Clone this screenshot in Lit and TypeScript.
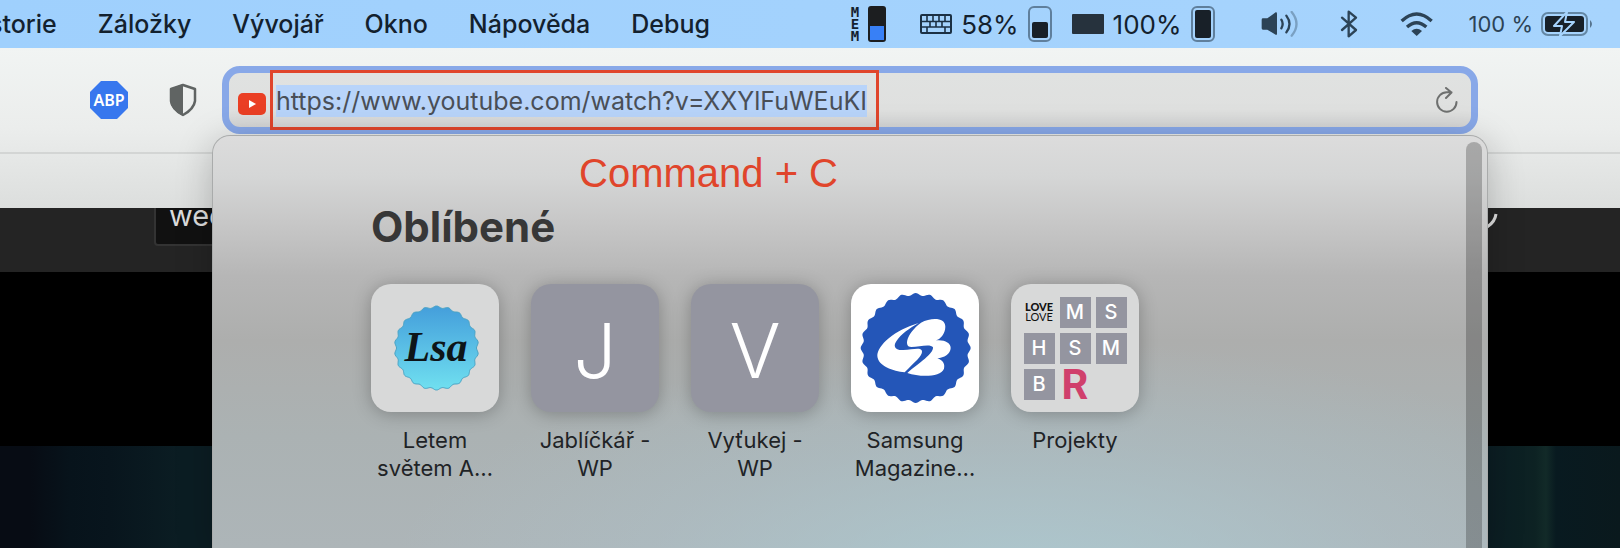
import { LitElement, html, css } from "lit";
import { customElement, property } from "lit/decorators.js";

/** Outline of a round badge with a wavy rim. */
function scallop(cx: number, cy: number, r: number, depth: number, waves: number): string {
  const steps = waves * 12;
  const points: string[] = [];
  for (let i = 0; i < steps; i++) {
    const a = (i / steps) * Math.PI * 2;
    const d = r + depth * Math.cos(a * waves);
    points.push(`${(cx + d * Math.sin(a)).toFixed(1)} ${(cy - d * Math.cos(a)).toFixed(1)}`);
  }
  return `M${points.join("L")}Z`;
}

const sans = css`"Inter", "Liberation Sans", sans-serif`;

@customElement("menu-bar")
class MenuBar extends LitElement {
  static styles = css`
    :host {
      display: flex;
      justify-content: space-between;
      align-items: center;
      height: 48px;
      padding-right: 27px;
      overflow: hidden;
      background: linear-gradient(90deg, #9fd0fd, #a7d4fd);
      color: #13212e;
      font-family: ${sans};
    }
    .menus {
      display: flex;
      gap: 41px;
      margin-left: -36px;
    }
    button {
      padding: 0;
      border: 0;
      background: none;
      color: inherit;
      font: 450 25px/32px ${sans};
    }
    .status, .monitors, .system, .monitor {
      display: flex;
      align-items: center;
    }
    .status { gap: 46px; }
    .monitors { gap: 20px; font-size: 26px; }
    .monitor { gap: 9px; }
    .memory { margin-right: 14px; }
    .stack {
      display: flex;
      flex-direction: column;
      font: 700 14px/12px "DejaVu Sans Mono", monospace;
    }
    .system { gap: 36px; color: #2c4356; }
    .speaker, .bluetooth { margin-right: 6px; }
    .power {
      display: flex;
      align-items: center;
      gap: 8px;
      font-size: 22px;
    }
    svg { display: block; flex: none; }
  `;

  private gauge(level: number) {
    const h = Math.round(28 * level);
    return html`<svg width="24" height="36" viewBox="0 0 24 36">
      <rect x="1" y="1" width="22" height="34" rx="5" fill="none" stroke="#5f7f9c" stroke-width="2" />
      <rect x="4" y=${32 - h} width="16" height=${h} rx="2" fill="#182028" />
    </svg>`;
  }

  render() {
    const menus = ["Historie", "Záložky", "Vývojář", "Okno", "Nápověda", "Debug"];
    return html`
      <nav class="menus">${menus.map((m) => html`<button>${m}</button>`)}</nav>
      <div class="status">
        <div class="monitors">
          <div class="monitor memory">
            <div class="stack"><span>M</span><span>E</span><span>M</span></div>
            <svg width="18" height="36" viewBox="0 0 18 36">
              <rect width="18" height="36" rx="3" fill="#1c1e20" />
              <rect x="2" y="20" width="14" height="14" fill="#3880f6" />
            </svg>
          </div>
          <div class="monitor">
            <svg width="32" height="20" viewBox="0 0 32 20" fill="none" stroke="#1b3044" stroke-width="2">
              <rect x="1" y="1" width="30" height="18" rx="1" />
              <path d="M1 7.5H31M1 13H31M7 1V7M13 1V7M19 1V7M25 1V7M10 7.500V13M16 7.500V13M22 7.500V13M7 13V19M25 13V19" stroke-width="1.600" />
            </svg>
            <span>58%</span>${this.gauge(0.57)}
          </div>
          <div class="monitor">
            <svg width="32" height="20" viewBox="0 0 32 20"><rect width="32" height="20" rx="1" fill="#26323d" /></svg>
            <span>100%</span>${this.gauge(1)}
          </div>
        </div>
        <div class="system">
          <svg class="speaker" width="37" height="26" viewBox="125 34 111 78" fill="none" stroke="#2c4356" stroke-width="7" stroke-linecap="round">
            <path d="M131 56H144L169 38Q173 37 173 42V102Q173 107 169 105L144 90H131Q127 90 127 86V60Q127 56 131 56Z" fill="#2c4356" stroke="none" />
            <path d="M186 60Q194 73 186 86M201 48Q220 73 201 98" />
            <path d="M217 37Q246 73 217 108" stroke="#7aa0c2" />
          </svg>
          <svg class="bluetooth" width="18" height="28" viewBox="355 24 54 84" fill="none" stroke="#2c4356" stroke-width="7" stroke-linejoin="round" stroke-linecap="round">
            <path d="M361 47L403 84L381 103V29L403 47L361 84" />
          </svg>
          <svg width="33" height="26" viewBox="538 30 99 78" fill="none" stroke="#2c4356" stroke-width="10">
            <path d="M543 60Q588 18 633 60M559 78Q588 52 617 78" />
            <path d="M572 90Q588 77 604 90L588 105Z" fill="#2c4356" stroke="none" />
          </svg>
          <div class="power">
            <span>100 %</span>
            <svg width="52" height="26" viewBox="0 0 52 26">
              <rect x="1" y="2" width="45" height="22" rx="6" fill="none" stroke="#6487a4" stroke-width="2" />
              <rect x="4" y="5" width="39" height="16" rx="3" fill="#182028" />
              <path d="M49 9Q53 13 49 17Z" fill="#56748e" />
              <path d="M26 1L13 15H21L19 25L33 11H24Z" fill="#182028" stroke="#a7d4fd" stroke-width="2" stroke-linejoin="round" />
            </svg>
          </div>
        </div>
      </div>
    `;
  }
}

interface Favorite {
  label: string;
  kind: "lsa" | "letter" | "samsung" | "folder";
  letter?: string;
}

@customElement("favorite-tile")
class FavoriteTile extends LitElement {
  @property({ attribute: false }) item!: Favorite;

  static styles = css`
    :host { display: block; width: 128px; }
    a {
      display: block;
      color: #1f2326;
      text-align: center;
      text-decoration: none;
      font: 400 22px/28px ${sans};
    }
    .tile {
      display: grid;
      place-items: center;
      box-sizing: border-box;
      height: 128px;
      margin-bottom: 14px;
      border-radius: 20px;
      overflow: hidden;
      background: #d8d9d9;
      box-shadow: 0 2px 18px rgba(0, 0, 0, 0.26);
    }
    .letter {
      padding-top: 4px;
      background: #9495a0;
      color: #fff;
      font-size: 76px;
      font-weight: 350;
    }
    .samsung { background: #fff; }
    svg { display: block; }
    .lsa-text { font: italic 700 42px "Liberation Serif", serif; }
    .grid {
      display: grid;
      grid-template-columns: repeat(3, 31px);
      grid-auto-rows: 31px;
      gap: 5px;
      line-height: 31px;
    }
    .cell { background: #9495a0; color: #fff; font-size: 20px; font-weight: 450; }
    .love {
      display: flex;
      flex-direction: column;
      justify-content: center;
      align-items: center;
      color: #111;
      font: 400 11px/10px "Lato", sans-serif;
    }
    .heavy { font-weight: 900; }
    .red { color: #d0406c; font: 700 42px/31px "Roboto", sans-serif; }
  `;

  private art() {
    switch (this.item.kind) {
      case "letter":
        return html`${this.item.letter}`;
      case "lsa":
        return html`<svg width="128" height="128" viewBox="0 0 128 128">
          <defs>
            <linearGradient id="sky" x1="0" y1="0" x2="0" y2="1">
              <stop offset="0" stop-color="#449edb" /><stop offset="1" stop-color="#70e0f0" />
            </linearGradient>
          </defs>
          <path d=${scallop(65.5, 64, 41, 1, 22)} fill="url(#sky)" stroke="#4aa3c4" stroke-width="1" />
          <text class="lsa-text" x="65" y="77" text-anchor="middle" fill="#0e1518">Lsa</text>
        </svg>`;
      case "samsung":
        return html`<svg width="128" height="128" viewBox="33 12 384 384">
          <path d=${scallop(227, 204, 161, 4, 24)} fill="#2456b8" />
          <g fill="#fff">
            <path d="M236 129C165 150 112 195 112 228C114 258 160 274 194 277C224 246 248 228 246 213C243 201 218 209 190 210C161 211 160 196 170 182C184 162 208 145 236 129Z" />
            <path d="M243 128C274 112 316 112 316 140C316 162 300 178 288 181C312 178 333 188 332 204C332 221 312 234 292 235C308 240 316 252 312 266C302 292 240 292 202 279C238 248 281 222 279 202C272 191 238 200 214 201C190 200 200 160 243 128Z" />
          </g>
        </svg>`;
      default:
        return html`<div class="grid">
          <span class="love"><span class="heavy">LOVE</span><span>LOVE</span></span>
          ${["M", "S", "H", "S", "M", "B"].map((c) => html`<span class="cell">${c}</span>`)}
          <span class="red">R</span>
        </div>`;
    }
  }

  render() {
    return html`<a href="#"><div class="tile ${this.item.kind}">${this.art()}</div>${this.item.label}</a>`;
  }
}

@customElement("favorites-panel")
class FavoritesPanel extends LitElement {
  static styles = css`
    :host {
      display: block;
      box-sizing: border-box;
      padding: 14px 160px 0 158px;
      border: 1px solid #a9abab;
      border-bottom: 0;
      border-radius: 18px 18px 0 0;
      background:
        radial-gradient(ellipse 640px 240px at 64% 108%, rgba(172, 204, 212, 0.8), rgba(172, 198, 208, 0.3) 60%, rgba(172, 196, 206, 0) 100%),
        linear-gradient(#dcdcdc, #d5d6d6 40px, #c6c6c6 90px, #b6b6b6 140px, #adaead 205px, #abb2b3 300px, #adb5b8);
      box-shadow: 0 6px 36px rgba(0, 0, 0, 0.22);
      font-family: ${sans};
    }
    .hint {
      margin: 0 0 0 208px;
      color: #e0452b;
      font: 400 40px/46px "Liberation Sans", Arial, sans-serif;
    }
    h1 {
      margin: 4px 0 0;
      color: #373737;
      font: 700 42px/54px ${sans};
    }
    .tiles {
      display: flex;
      flex-wrap: wrap;
      gap: 32px;
      margin-top: 30px;
    }
    .thumb {
      position: absolute;
      top: 6px;
      right: 5px;
      bottom: 0;
      width: 16px;
      border-radius: 8px 8px 0 0;
      background: rgba(0, 0, 0, 0.23);
    }
  `;

  private items: Favorite[] = [
    { label: "Letem světem A…", kind: "lsa" },
    { label: "Jablíčkář - WP", kind: "letter", letter: "J" },
    { label: "Vyťukej - WP", kind: "letter", letter: "V" },
    { label: "Samsung Magazine…", kind: "samsung" },
    { label: "Projekty", kind: "folder" },
  ];

  render() {
    return html`
      <p class="hint">Command + C</p>
      <h1>Oblíbené</h1>
      <div class="tiles">${this.items.map((i) => html`<favorite-tile .item=${i}></favorite-tile>`)}</div>
      <div class="thumb"></div>
    `;
  }
}

@customElement("app-root")
class AppRoot extends LitElement {
  static styles = css`
    :host {
      display: flex;
      flex-direction: column;
      height: 100vh;
      overflow: hidden;
      background: #000;
      font-family: ${sans};
    }
    .chrome {
      position: relative;
      z-index: 1;
      background: linear-gradient(#f1f4f3, #ebedec 50%, #dcdedd);
    }
    .toolbar {
      display: flex;
      align-items: center;
      height: 106px;
      padding: 0 142px 0 90px;
      box-sizing: border-box;
      border-bottom: 2px solid #d3d5d4;
    }
    .tabs { height: 54px; }
    button { display: block; padding: 0; border: 0; background: none; }
    svg { display: block; }
    .shield { margin: 0 25px 0 41px; }
    .address {
      position: relative;
      flex: 1;
      display: flex;
      align-items: center;
      height: 54px;
      padding: 0 13px 0 9px;
      border: 7px solid #88a8e8;
      border-radius: 18px;
      background: linear-gradient(#e0e2e1, #dfe0df 70%, #d4d5d5);
    }
    .site { margin-top: 8px; }
    .marked {
      display: flex;
      align-items: center;
      align-self: stretch;
      margin: 0 auto 0 7px;
      padding: 2px 8px 0 3px;
      outline: 3px solid #e0452b;
    }
    input {
      field-sizing: content;
      min-width: 592px;
      padding: 0;
      border: 0;
      outline: 0;
      background: none;
      color: #4a4f57;
      font: 400 25px/32px ${sans};
    }
    input::selection { background: #b8d4fa; color: #4a4f57; }
    favorites-panel {
      position: absolute;
      top: 62px;
      left: -17px;
      right: -17px;
      height: calc(100vh - 135px);
    }
    .page { flex: 1; display: flex; flex-direction: column; overflow: hidden; }
    .masthead {
      display: flex;
      justify-content: space-between;
      height: 64px;
      padding: 0 122px 0 154px;
      background: #242424;
    }
    .search {
      box-sizing: border-box;
      width: 400px;
      height: 38px;
      padding-left: 13px;
      border: 2px solid #333;
      border-top: 0;
      border-radius: 0 0 4px 4px;
      background: #111;
      color: #dcdcdc;
      font: 400 29px/16px ${sans};
    }
    .video {
      flex: 1;
      margin-top: 174px;
      background: linear-gradient(90deg, #070c14 30px, #07131b 70px, #08151d 110px, #0b1d23 180px, #0b1d23 1488px, #0d2223 1535px, #122a28 1546px, #081a20 1556px, #0a191d);
    }
  `;

  firstUpdated() {
    const field = this.renderRoot.querySelector("input")!;
    field.focus({ preventScroll: true });
    field.select();
  }

  render() {
    return html`
      <menu-bar></menu-bar>
      <header class="chrome">
        <div class="toolbar">
          <button aria-label="Adblock Plus">
            <svg width="38" height="38" viewBox="0 0 38 38">
              <path d="M11 0H27L38 11V27L27 38H11L0 27V11Z" fill="#3777ee" />
              <text x="19" y="25" text-anchor="middle" fill="#fff" font-family="Noto Sans, sans-serif" font-weight="600" font-size="16">ABP</text>
            </svg>
          </button>
          <button class="shield" aria-label="Shield">
            <svg width="28" height="34" viewBox="0 0 28 34">
              <path d="M14 2L26 6V18Q25 26 14 32Q3 26 2 18V6Z" fill="none" stroke="#606463" stroke-width="2.500" stroke-linejoin="round" />
              <path d="M14 1V33Q2 27 1 18V6Z" fill="#606463" />
            </svg>
          </button>
          <div class="address">
            <svg class="site" width="28" height="22" viewBox="0 0 28 22">
              <rect width="28" height="22" rx="5" fill="#ea3f24" /><path d="M11 7L18 11L11 15Z" fill="#fff" />
            </svg>
            <div class="marked">
              <input type="text" aria-label="URL" spellcheck="false" .value=${"https://www.youtube.com/watch?v=XXYlFuWEuKI"} />
            </div>
            <button aria-label="Reload">
              <svg width="22" height="26" viewBox="0 0 22 26" fill="none" stroke="#6e706f" stroke-width="2" stroke-linecap="round" stroke-linejoin="round">
                <path d="M20.500 15A9.700 9.700 0 1 1 10.800 5.300H15.500M10 1L15.500 5.500L10 11" />
              </svg>
            </button>
            <favorites-panel></favorites-panel>
          </div>
        </div>
        <div class="tabs"></div>
      </header>
      <main class="page">
        <div class="masthead">
          <div class="search">wee</div>
          <svg width="20" height="20" viewBox="0 0 20 20"><path d="M18 6Q17 14 9 19" fill="none" stroke="#ddd" stroke-width="3" /></svg>
        </div>
        <div class="video"></div>
      </main>
    `;
  }
}
